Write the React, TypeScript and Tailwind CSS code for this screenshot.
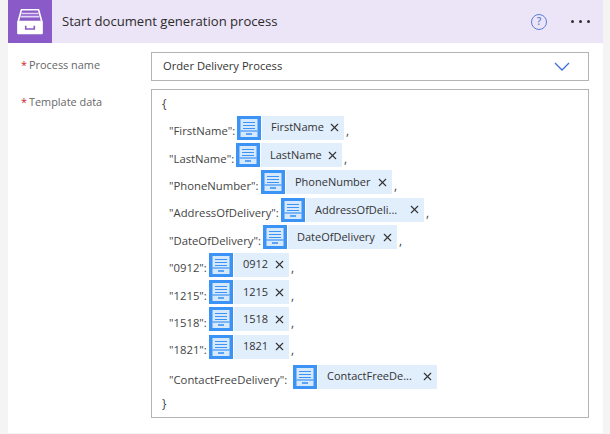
import { X } from 'lucide-react';

const rows = [
  { key: '"FirstName":', label: 'FirstName', chip: 'w-[82px]', keyW: 'w-[75px]' },
  { key: '"LastName":', label: 'LastName', chip: 'w-[81px]', keyW: 'w-[74px]' },
  { key: '"PhoneNumber":', label: 'PhoneNumber', chip: 'w-[106px]', keyW: 'w-[99px]' },
  { key: '"AddressOfDelivery":', label: 'AddressOfDeli...', chip: 'w-[118px]', keyW: 'w-[119px]' },
  { key: '"DateOfDelivery":', label: 'DateOfDelivery', chip: 'w-[109px]', keyW: 'w-[101px]' },
  { key: '"0912":', label: '0912', chip: 'w-[55px]', keyW: 'w-[47px]' },
  { key: '"1215":', label: '1215', chip: 'w-[55px]', keyW: 'w-[47px]' },
  { key: '"1518":', label: '1518', chip: 'w-[55px]', keyW: 'w-[47px]' },
  { key: '"1821":', label: '1821', chip: 'w-[55px]', keyW: 'w-[47px]' },
  { key: '"ContactFreeDelivery":', label: 'ContactFreeDe...', chip: 'w-[119px]', keyW: 'w-[131px]', last: true },
];

function TokenIcon() {
  return (
    <span className="flex h-6 w-6 shrink-0 items-center justify-center bg-[#3b93f5]">
      <svg width="18" height="20" viewBox="0 0 18 20" fill="none" aria-hidden>
        <rect x="0.5" y="1" width="17" height="18" fill="#d6e8fc" />
        <path d="M3 4.5h12M3 7.5h12M3 10.5h12" stroke="#3b93f5" strokeWidth="1.2" />
        <path d="M0.5 13h17" stroke="#3b93f5" strokeWidth="1.2" />
        <path d="M6 16h6" stroke="#3b93f5" strokeWidth="1.6" />
      </svg>
    </span>
  );
}

function DrawerIcon() {
  return (
    <svg width="30" height="30" viewBox="0 0 28 28" fill="none" aria-hidden>
      <path d="M6 2.5h16l3 11H3z" fill="#8a5ac9" stroke="#fff" strokeWidth="1.5" strokeLinejoin="round" />
      <path d="M6 6h16M5.2 9h17.6" stroke="#e4d7f5" strokeWidth="1.5" />
      <path d="M2 13.5h24v11a1 1 0 0 1-1 1H3a1 1 0 0 1-1-1z" fill="#fff" />
      <path d="M10 17.5v3h8v-3" stroke="#8a5ac9" strokeWidth="1.5" />
    </svg>
  );
}

export default function App() {
  return (
    <div className="h-[434px] w-[610px] overflow-hidden bg-[#f4f4f4] pl-2 pr-[7px] font-['Open_Sans',sans-serif] text-[#333]">
      <div className="h-[433px] bg-white">
        <header className="flex h-[43px] items-center bg-[#ece4f7]">
          <span className="flex h-[43px] w-[44px] items-center justify-center bg-[#8a5ac9]">
            <DrawerIcon />
          </span>
          <h1 className="ml-[10px] text-[13.1px] text-[#2b2b2b]">Start document generation process</h1>
          <div className="ml-auto mr-[13px] flex items-center gap-[24px]">
            <span className="flex h-4 w-4 items-center justify-center rounded-full border-[1.5px] border-[#5b7fd6] text-[10px] font-semibold text-[#5b7fd6]">?</span>
            <span className="flex gap-[5px]">
              <i className="h-[3px] w-[3px] rounded-full bg-[#333]" />
              <i className="h-[3px] w-[3px] rounded-full bg-[#333]" />
              <i className="h-[3px] w-[3px] rounded-full bg-[#333]" />
            </span>
          </div>
        </header>

        <section className="grid grid-cols-[143px_438px] gap-y-2 pt-[9px]">
          <label className="pl-[13px] pt-[5px] text-[10.9px] text-[#666]">
            <span className="mr-[2px] text-[#c8262c]">*</span>Process name
          </label>
          <div className="flex h-[29px] items-center justify-between border border-[#b3b3b3] pl-[11px] pr-[18px] text-[11.2px] text-[#333]">
            Order Delivery Process
            <svg width="16" height="9" viewBox="0 0 16 9" fill="none" aria-hidden>
              <path d="M1 1l7 7 7-7" stroke="#3b6fd6" strokeWidth="1.3" />
            </svg>
          </div>

          <label className="pl-[13px] pt-[5px] text-[10.9px] text-[#666]">
            <span className="mr-[2px] text-[#c8262c]">*</span>Template data
          </label>
          <div className="h-[329px] border border-[#b3b3b3] pl-[10px] pt-[4px] text-xs text-[#444]">
            <div className="h-5 leading-5">{'{'}</div>
            <div className="flex flex-col">
              {rows.map((row) => (
                <div key={row.label} className={`flex items-center ${row.last ? 'h-[32px]' : 'h-[27.4px]'}`}>
                  <span className={`${row.keyW} shrink-0 whitespace-nowrap pl-[7px] pt-[6px] text-[11.3px]`}>{row.key}</span>
                  <TokenIcon />
                  <span className={`${row.chip} ml-px flex h-6 shrink-0 items-center justify-between bg-[#e1eefc] pl-[9px] pr-[3px] text-[11px] text-[#333]`}>
                    <span className="whitespace-nowrap">{row.label}</span>
                    <X size={13} strokeWidth={2} className="shrink-0" />
                  </span>
                  {!row.last && <span className="ml-[2px] pt-[7px]">,</span>}
                </div>
              ))}
            </div>
            <div className="h-5 pt-px leading-5">{'}'}</div>
          </div>
        </section>
      </div>
    </div>
  );
}
